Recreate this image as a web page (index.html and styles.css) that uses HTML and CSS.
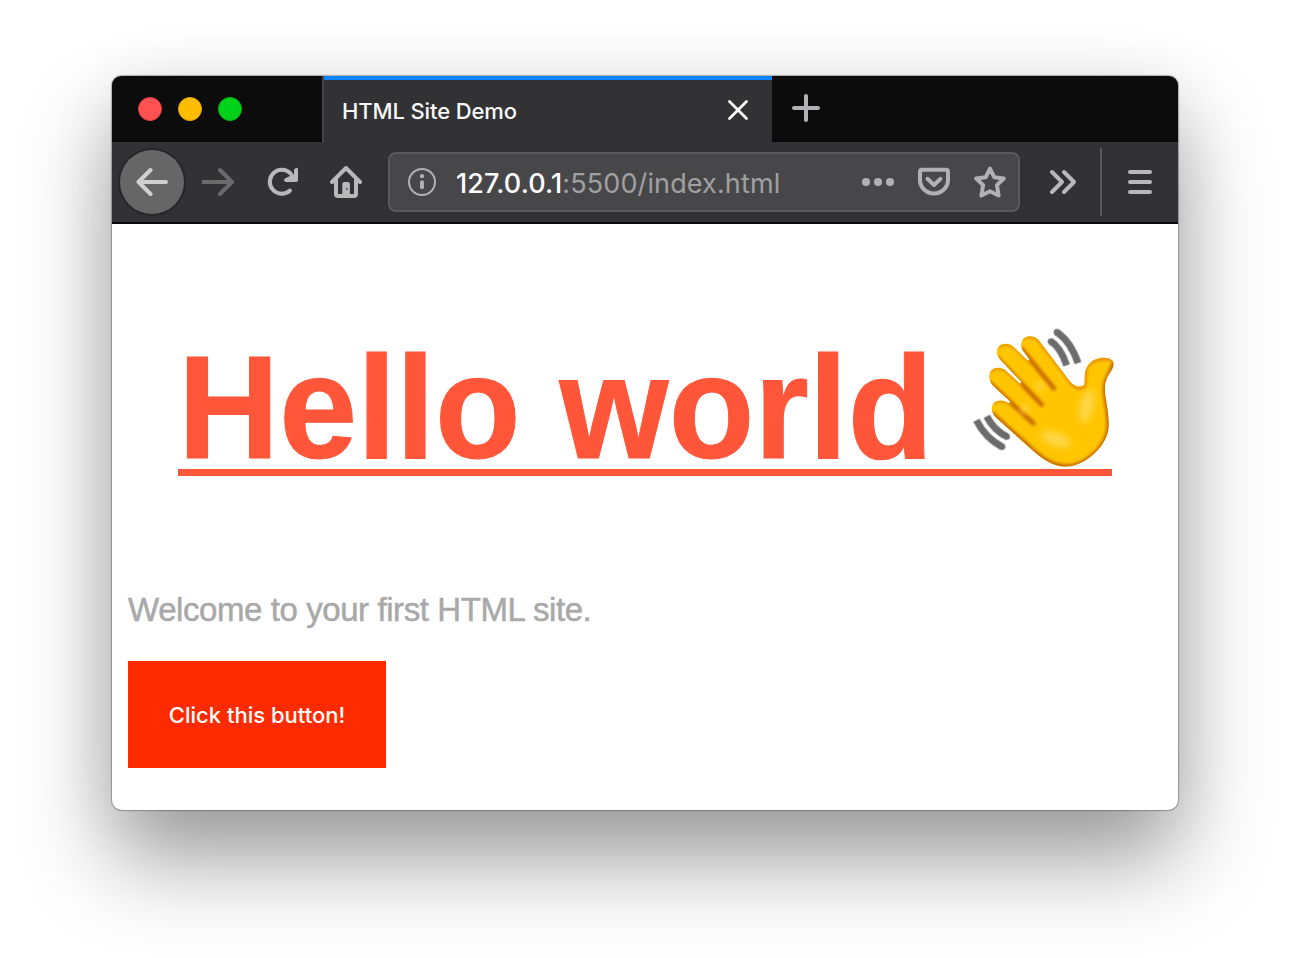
FILE: index.html
```html
<!DOCTYPE html>
<html lang="en">
<head>
<meta charset="utf-8">
<title>HTML Site Demo</title>
<link rel="stylesheet" href="styles.css">
</head>
<body>
<div class="window">
  <header class="tabbar">
    <div class="lights"><i class="light red"></i><i class="light yellow"></i><i class="light green"></i></div>
    <div class="tab">
      <span class="tab-title">HTML Site Demo</span>
      <svg class="close" width="20" height="20" viewBox="0 0 20 20"><path d="M1.5 1.5l17 17M18.5 1.5l-17 17"/></svg>
    </div>
    <svg class="plus" width="28" height="28" viewBox="0 0 28 28"><path d="M14 2v24M2 14h24"/></svg>
  </header>
  <nav class="toolbar">
    <span class="back"><svg width="32" height="32" viewBox="0 0 32 32"><path d="M14.5 4L2.5 16l12 12M2.5 16H30"/></svg></span>
    <svg class="icon forward" width="32" height="32" viewBox="0 0 32 32"><path d="M18 4l12 12-12 12M30 16H0"/></svg>
    <svg class="icon reload" width="32" height="32" viewBox="0 0 32 32"><path d="M24 24.5A12 12 0 1 1 25 8"/><path class="solid" d="M30 1.8c1.3-.3 2 .6 2 1.6V14c0 1.3-.8 2-2 2H20c-2 0-2.6-2-1.2-3.4L28 8V3.7z"/></svg>
    <svg class="icon home" width="32" height="32" viewBox="0 0 32 32"><path d="M2 16L16 2l14 14"/><path d="M6 14v14q0 2 2 2h16q2 0 2-2V14"/><path class="solid" d="M12.3 30V18q0-2 2-2h3.6q2 0 2 2v12z"/><path class="knob" d="M16 22h1.5v2H16z"/></svg>
    <div class="urlbar">
      <svg class="info" width="28" height="28" viewBox="0 0 28 28"><circle cx="14" cy="14" r="13"/><circle class="dot" cx="14" cy="8.2" r="2.1"/><rect class="dot" x="12" y="12.2" width="4" height="9" rx="2"/></svg>
      <span class="url"><b>127.0.0.1</b>:5500/index.html</span>
      <svg class="dots" width="32" height="8" viewBox="0 0 32 8"><circle cx="4" cy="4" r="4"/><circle cx="16" cy="4" r="4"/><circle cx="28" cy="4" r="4"/></svg>
      <svg class="pocket" width="32" height="30" viewBox="0 0 32 30"><path d="M4 2.8h24q2 0 2 2V13a14 13.5 0 0 1-28 0V4.800q0-2 2-2z"/><path d="M9.500 11.800L16 18l6.500-6.200"/></svg>
      <svg class="star" width="32" height="32" viewBox="0 0 32 32"><path d="M16 2.500l4.200 8.700 9.600 1.300-6.900 6.600 1.700 10.400L16 25.200l-8.600 4.300 1.700-10.400-6.900-6.600 9.600-1.300z"/></svg>
    </div>
    <svg class="icon more" width="28" height="28" viewBox="0 0 28 28"><path d="M3 4l10 10L3 24M15 4l10 10-10 10"/></svg>
    <span class="divider"></span>
    <svg class="icon menu" width="24" height="24" viewBox="0 0 24 24"><path d="M2 2h20M2 12h20M2 22h20"/></svg>
  </nav>
  <main class="page">
    <h1 class="hello"><span class="hello-text">Hello world</span>
      <svg class="wave" width="144" height="140" viewBox="36 36 432 420" role="img" aria-label="Waving hand">
        <defs>
          <clipPath id="hand"><path d="M372 208C378 190 368 168 385 147C402 124 438 120 455 132C466 142 460 155 450 170C434 192 433 212 436 240C444 285 450 325 443 350C430 400 370 452 315 452C280 451 248 430 220 405L112 308C96 295 92 278 98 266C107 251 130 250 145 262L152 258L100 210C86 196 85 177 92 166C103 152 123 153 136 163L180 203L184 198L121 131C108 117 108 102 116 92C128 80 148 81 161 93L204 135L208 130L188 103C180 88 184 74 192 67C206 57 225 60 235 71L325 190C338 207 352 218 372 208Z"/></clipPath>
          <filter id="soft" x="-30%" y="-30%" width="160%" height="160%"><feGaussianBlur stdDeviation="5"/></filter>
          <filter id="glow" x="-40%" y="-40%" width="180%" height="180%"><feGaussianBlur stdDeviation="9"/></filter>
        </defs>
        <g clip-path="url(#hand)">
          <path fill="#ffc600" d="M36 36h432v420H36z"/>
          <g fill="none" stroke-linecap="round" filter="url(#soft)">
            <path stroke="#c96d00" stroke-width="17" d="M96 294L225 410C260 438 284 452 318 453C373 453 432 402 445 350C452 325 444 285 438 240C434 212 436 192 452 170L463 142"/>
            <path stroke="#c96d00" stroke-width="14" d="M88 200L220 322M112 126L245 266M184 98L281 217"/>
            <path stroke="#e88f00" stroke-width="11" d="M235 72L324 187C340 210 354 222 373 212C378 190 370 170 382 148Q405 122 455 130"/>
            <path stroke="#e89500" stroke-width="9" d="M100 262Q118 248 145 260M90 168Q110 150 137 163L180 203M115 93Q136 79 161 92L205 135M188 68Q212 55 236 72"/>
          </g>
          <g fill="#ffd648" filter="url(#glow)"><ellipse cx="380" cy="270" rx="20" ry="50" transform="rotate(12 380 270)"/><ellipse cx="288" cy="370" rx="46" ry="20" transform="rotate(20 288 370)"/><circle cx="240" cy="210" r="12"/><circle cx="195" cy="278" r="12"/></g>
        </g>
        <g fill="none" stroke="#6c6c6c" stroke-width="21" stroke-linecap="butt">
          <path d="M291 49Q332 77 354 141"/><path d="M271 75Q301 93 320 148"/>
          <path d="M49 313Q76 366 127 393"/><path d="M80 301Q102 344 143 363"/>
        </g>
        <g fill="#6c6c6c"><circle cx="291" cy="49" r="10"/><circle cx="272" cy="76" r="9"/><circle cx="126" cy="392" r="10"/><circle cx="141" cy="362" r="9"/></g>
      </svg>
    </h1>
    <p class="welcome"><span>Welcome to your first HTML site.</span></p>
    <button class="button">Click this button!</button>
  </main>
</div>
</body>
</html>
```
FILE: styles.css
```css
* { box-sizing: border-box; }
body { margin: 0; height: 958px; padding: 76px 112px; background: #fff; overflow: hidden; font-family: Inter, "Liberation Sans", sans-serif; }
svg { display: block; flex: none; fill: none; stroke-linejoin: round; }
.window { width: 1066px; height: 734px; border-radius: 10px; background: #fff; box-shadow: 0 0 1px 1px rgba(0,0,0,.28), 0 50px 90px 0 rgba(0,0,0,.38), 0 5px 70px rgba(0,0,0,.07); }
.tabbar { display: flex; height: 66px; background: #0c0c0d; border-bottom: 1px solid #050506; border-radius: 9px 9px 0 0; }
.lights { display: flex; gap: 16px; width: 210px; padding: 21px 0 0 26px; }
.light { width: 24px; height: 24px; border-radius: 50%; }
.red { background: #ff5151; border: 1px solid #e53d40; }
.yellow { background: #ffbd00; border: 1px solid #e5a600; }
.green { background: #00d119; border: 1px solid #00b512; }
.tab { display: flex; align-items: center; justify-content: space-between; width: 450px; height: 66px; padding: 2px 24px 0 20px; background: linear-gradient(#0a84ff, #0a84ff) 2px 0 / 448px 4px no-repeat, linear-gradient(90deg, #444446 2px, #323234 2px); }
.tab-title { padding-top: 2px; color: #f9f9fa; font-size: 22px; font-weight: 500; letter-spacing: -.12px; line-height: 30px; white-space: nowrap; }
.close { stroke: #fff; stroke-width: 2.7; stroke-linecap: round; }
.plus { margin: 18px 0 0 20px; stroke: #b1b1b3; stroke-width: 4; stroke-linecap: round; }
.toolbar { display: flex; align-items: center; height: 82px; padding: 0 24px 0 8px; background: #323234; border-bottom: 2px solid #0c0c0d; }
.icon { stroke: #b9b9ba; stroke-width: 4; stroke-linecap: round; }
.solid { fill: #b9b9ba; stroke: none; }
.knob { fill: #555; stroke: none; }
.back { display: grid; place-items: center; flex: none; width: 64px; height: 64px; border-radius: 50%; background: #666667; box-shadow: 0 0 0 2px #272729; }
.back svg { stroke: #d0d0d0; stroke-width: 4; stroke-linecap: round; }
.forward { margin-left: 18px; stroke: #6a6a6b; }
.reload { margin-left: 32px; }
.home { margin-left: 32px; }
.urlbar { display: flex; align-items: center; flex: none; width: 632px; height: 60px; margin-left: 26px; padding: 0 12px 0 18px; border: 2px solid #5a5a5c; border-radius: 8px; background: #474749; }
.info { stroke: #b1b1b3; stroke-width: 2; }
.dot { fill: #b1b1b3; stroke: none; }
.url { width: 406px; margin-left: 20px; padding-top: 3px; color: #a0a0a2; font-size: 27px; letter-spacing: .12px; white-space: nowrap; }
.url b { color: #fff; font-weight: 500; }
.dots { fill: #b1b1b3; }
.pocket, .star { margin-left: 24px; stroke: #b1b1b3; stroke-width: 4; stroke-linecap: round; }
.more { margin-left: 29px; }
.divider { width: 2px; height: 68px; margin-left: 23px; background: #59595b; }
.menu { margin-left: 26px; }
.page { padding: 103px 16px 0; }
.hello { display: flex; justify-content: space-between; width: 934px; height: 149px; margin: 0 0 0 50px; border-bottom: 7px solid #ff563a; color: #ff563a; font: 700 146px/149px "Liberation Sans", Arial, sans-serif; white-space: nowrap; }
.hello-text { width: 757px; padding-top: 6px; transform: scaleX(.96); transform-origin: left; -webkit-text-stroke: 1px #ff563a; }
.wave { margin: 1px -4px 0 0; }
.welcome { height: 38px; margin: 115px 0 32px; color: #a9a9a9; -webkit-text-stroke: .5px #a9a9a9; font: 33px/38px "Liberation Sans", Arial, sans-serif; letter-spacing: -.42px; }
.button { display: block; width: 258px; height: 107px; padding: 0; border: 0; background: #ff2b00; color: #fff; font: 500 22px Inter, sans-serif; white-space: nowrap; }
```
